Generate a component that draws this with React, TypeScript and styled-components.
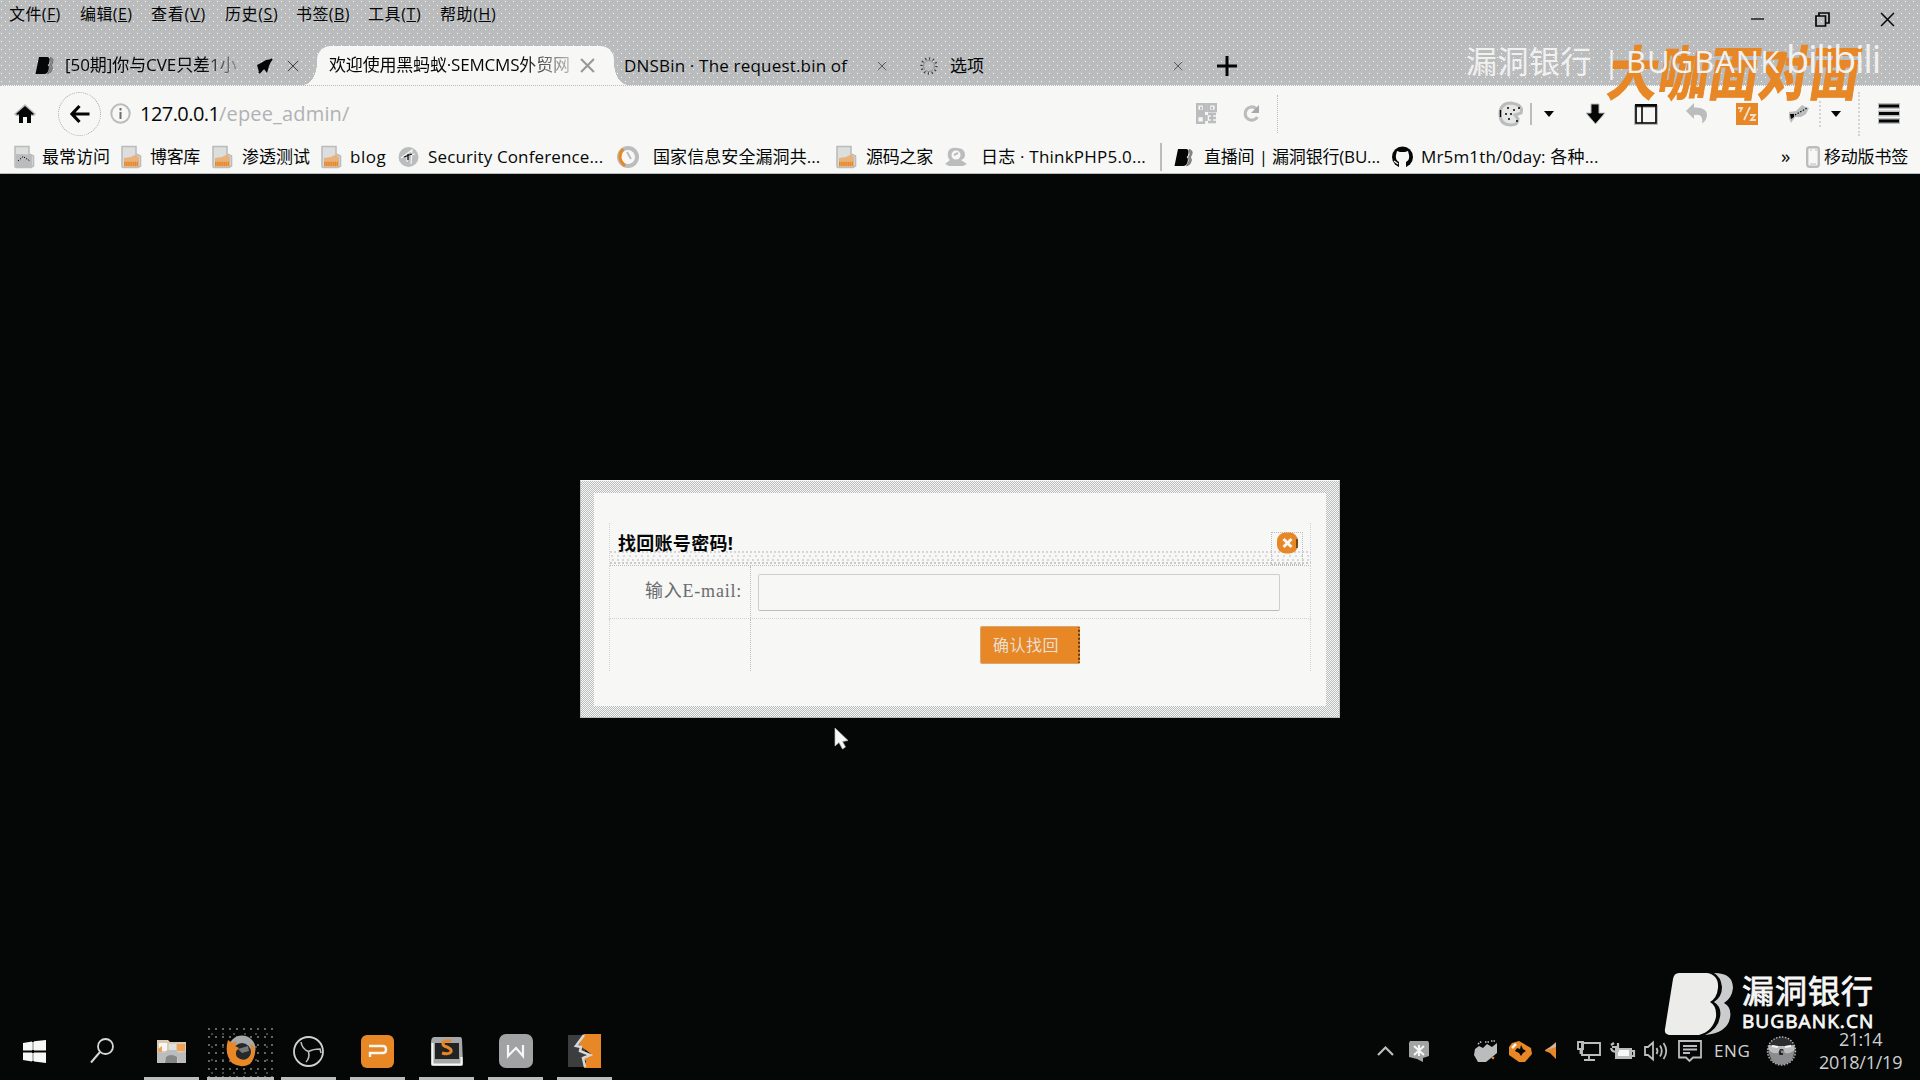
import React, { useLayoutEffect, useRef } from "react";
import styled, { createGlobalStyle, css } from "styled-components";

const INK = "#050706";
const GREY = "#bbbcbe";
const PAPER = "#f7f7f6";
const ORANGE = "#e78726";
const UI = `"Open Sans", "Noto Sans CJK SC", sans-serif`;

const Global = createGlobalStyle`
  * { box-sizing: border-box; }
  html, body { margin: 0; background: ${INK}; }
  svg { display: block; flex: none; overflow: visible; }
`;

const checker = css`
  background: conic-gradient(${GREY} 25%, ${PAPER} 0 50%, ${GREY} 0 75%, ${PAPER} 0) 0 0 / 2px 2px;
`;

const Screen = styled.div`
  position: relative;
  width: 1920px;
  height: 1080px;
  overflow: hidden;
  display: flex;
  flex-direction: column;
  background: ${INK};
  color: ${INK};
  font-family: ${UI};
`;

/* ---------- shared pieces ---------- */
const Slot = styled.div<{ $gap?: number; $top?: number }>`
  flex: none;
  display: flex;
  align-items: center;
  margin-left: ${(p) => p.$gap ?? 0}px;
  margin-top: ${(p) => p.$top ?? 0}px;
`;

const Text = styled.div<{ $gap?: number; $w: number; $size: number; $color?: string; $bold?: boolean; $top?: number; $family?: string; $fade?: boolean; $line?: number }>`
  flex: none;
  width: ${(p) => p.$w}px;
  margin-left: ${(p) => p.$gap ?? 0}px;
  margin-top: ${(p) => p.$top ?? 0}px;
  font-size: ${(p) => p.$size}px;
  font-family: ${(p) => p.$family ?? UI};
  font-weight: ${(p) => (p.$bold ? 700 : 400)};
  color: ${(p) => p.$color ?? INK};
  line-height: ${(p) => p.$line ?? 1.3};
  white-space: nowrap;
  ${(p) => p.$fade && "mask-image: linear-gradient(90deg, #000 80%, rgba(0, 0, 0, 0.25));"}
`;

type FitProps = { w: number; size?: number; gap?: number; color?: string; bold?: boolean; top?: number; family?: string; fade?: boolean; line?: number; children: React.ReactNode };

/* Single line label whose tracking is adjusted so it fills the given width. */
function Fit({ w, size = 17, gap, color, bold, top, family, fade, line, children }: FitProps) {
  const ref = useRef<HTMLSpanElement>(null);
  useLayoutEffect(() => {
    const el = ref.current;
    if (!el) return;
    el.style.letterSpacing = "0px";
    const n = (el.textContent || "").length;
    el.style.letterSpacing = `${(w - el.offsetWidth) / n}px`;
  }, [w]);
  return (
    <Text $w={w} $size={size} $gap={gap} $color={color} $bold={bold} $top={top} $family={family} $fade={fade} $line={line}>
      <span ref={ref}>{children}</span>
    </Text>
  );
}

const Rule = styled.div<{ $gap: number; $h: number; $dotted?: boolean }>`
  flex: none;
  width: 0;
  height: ${(p) => p.$h}px;
  margin-left: ${(p) => p.$gap}px;
  border-left: 2px ${(p) => (p.$dotted ? "dotted #d3d4d5" : `solid ${GREY}`)};
`;

/* ---------- top chrome ---------- */
const Chrome = styled.header`
  flex: none;
  height: 85px;
  display: flex;
  flex-direction: column;
  background-color: ${GREY};
  background-image: radial-gradient(circle at 1.5px 1.5px, ${PAPER} 0.8px, transparent 0.9px),
    radial-gradient(circle at 5.5px 5.5px, ${PAPER} 0.8px, transparent 0.9px);
  background-size: 8px 8px;
`;

const Menu = styled.nav`
  display: flex;
  padding-left: 9px;
  height: 46px;
`;
const MenuItem = styled.div<{ $w: number }>`
  flex: none;
  width: ${(p) => p.$w}px;
  padding-top: 4px;
`;
const WindowButtons = styled.div`
  margin-left: auto;
  display: flex;
  gap: 50px;
  padding: 12px 25px 0 0;
`;

const Tabs = styled.div`
  display: flex;
  align-items: center;
  height: 39px;
`;
const ActiveTab = styled.div`
  position: relative;
  flex: none;
  display: flex;
  align-items: center;
  width: 297px;
  height: 39px;
  margin-left: 18px;
  padding-left: 12px;
  background: ${PAPER};
  border-radius: 14px 14px 0 0;
  &::before,
  &::after {
    content: "";
    position: absolute;
    bottom: 0;
    width: 14px;
    height: 22px;
  }
  &::before {
    right: 100%;
    background: radial-gradient(ellipse 14px 22px at 0 0, transparent 98%, ${PAPER} 100%);
  }
  &::after {
    left: 100%;
    background: radial-gradient(ellipse 14px 22px at 100% 0, transparent 98%, ${PAPER} 100%);
  }
`;

const Toolbar = styled.div`
  flex: none;
  display: flex;
  align-items: center;
  height: 56px;
  background: ${PAPER};
  border-top: 1px dotted ${GREY};
`;
const BackButton = styled.div`
  flex: none;
  display: grid;
  place-items: center;
  width: 43px;
  height: 44px;
  margin-left: 22px;
  border: 1px dotted #a4a5a7;
  border-radius: 50%;
`;
const AddressBar = styled.div`
  flex: none;
  display: flex;
  align-items: center;
  width: 1168px;
  height: 38px;
  margin-left: 9px;
  border-right: 1px dotted ${GREY};
`;
const Bookmarks = styled.div`
  flex: none;
  display: flex;
  align-items: center;
  height: 33px;
  background: ${PAPER};
  border-bottom: 1px solid ${GREY};
`;

/* ---------- page ---------- */
const Page = styled.main`
  flex: none;
  height: 848px;
  padding: 306px 0 0 580px;
`;
const DialogFrame = styled.section`
  width: 760px;
  height: 238px;
  padding: 13px 14px 12px;
  border: 1px solid ${GREY};
  border-top-color: ${PAPER};
  ${checker}
`;
const DialogBody = styled.div`
  height: 213px;
  margin: -1px 0 0 -1px;
  width: 732px;
  padding: 30px 15px 0;
  background: ${PAPER};
`;
const DialogHead = styled.div`
  display: flex;
  justify-content: space-between;
  height: 43px;
  padding: 9px 7px 0 8px;
  border: 1px dotted #d0d1d2;
  border-top: 0;
  border-bottom-color: ${GREY};
  background: radial-gradient(circle at 1px 1px, #c6c7c8 0.7px, transparent 0.8px) 0 100% / 4px 3px repeat-x,
    radial-gradient(circle at 3px 1px, #d3d4d5 0.7px, transparent 0.8px) 0 36px / 5px 3px repeat-x,
    radial-gradient(circle at 2px 1px, #d8d9da 0.7px, transparent 0.8px) 0 32px / 6px 3px repeat-x,
    radial-gradient(circle at 1px 1px, #d3d4d5 0.7px, transparent 0.8px) 0 28px / 4px 3px repeat-x;
`;
const CloseBox = styled.div`
  display: flex;
  justify-content: center;
  width: 32px;
  height: 33px;
  border: 1px dotted ${GREY};
`;
const FormRow = styled.div<{ $h: number; $last?: boolean }>`
  display: grid;
  grid-template-columns: 141px 1fr;
  height: ${(p) => p.$h}px;
  border: 1px dotted #d0d1d2;
  border-top: 0;
  ${(p) => p.$last && "border-bottom: 0;"}
`;
const LabelCell = styled.div`
  display: flex;
  align-items: center;
  padding-left: 35px;
  border-right: 1px dotted ${GREY};
`;
const FieldCell = styled.div<{ $top: number }>`
  padding: ${(p) => p.$top}px 0 0 7px;
`;
const EmailInput = styled.input`
  display: block;
  width: 522px;
  height: 37px;
  padding: 0 8px;
  font: 16px ${UI};
  background: transparent;
  border: 1px solid #cdcecf;
  border-bottom-color: ${GREY};
  border-radius: 2px;
  outline: 0;
`;
const ConfirmButton = styled.button`
  display: flex;
  align-items: center;
  width: 100px;
  height: 38px;
  margin-left: 222px;
  padding: 0 0 0 12px;
  border: 1px solid #d8a670;
  border-right: 2px dotted #5f3a12;
  border-radius: 2px;
  background: ${ORANGE};
`;

/* ---------- taskbar ---------- */
const Taskbar = styled.footer`
  flex: none;
  display: flex;
  height: 58px;
  background: ${INK};
`;
const Task = styled.div<{ $w: number; $gap: number; $running?: boolean; $active?: boolean }>`
  flex: none;
  display: grid;
  place-items: center;
  width: ${(p) => p.$w}px;
  height: 58px;
  padding-top: 3px;
  margin-left: ${(p) => p.$gap}px;
  border-bottom: 3px solid ${(p) => (p.$running ? GREY : "transparent")};
  ${(p) =>
    p.$active &&
    `background: radial-gradient(circle at 2px 2px, #6b6c6e 0.7px, transparent 0.8px) 0 5px / 7px 8px padding-box,
      radial-gradient(circle at 5px 7px, #4b4c4e 0.7px, transparent 0.8px) 0 5px / 11px 13px padding-box;`}
`;
const Tray = styled.div`
  display: flex;
  align-items: center;
  height: 58px;
`;
const Clock = styled.div`
  flex: none;
  display: flex;
  flex-direction: column;
  width: 84px;
  margin-left: 22px;
`;

/* ---------- overlays ---------- */
const BrandTop = styled.div`
  position: absolute;
  left: 1466px;
  top: 36px;
  height: 50px;
  display: flex;
  align-items: center;
`;
const Presenter = styled.div`
  position: absolute;
  left: 1609px;
  top: 33px;
  height: 80px;
  display: flex;
  align-items: center;
  transform: skewX(-9deg) scaleY(1.17);
  -webkit-text-stroke: 1px ${ORANGE};
`;
const BrandBottom = styled.div`
  position: absolute;
  left: 1665px;
  top: 973px;
  display: flex;
`;
const BrandWords = styled.div`
  display: flex;
  flex-direction: column;
  margin: 2px 0 0 9px;
  -webkit-text-stroke: 0.8px ${PAPER};
`;
const Pointer = styled.div`
  position: absolute;
  left: 835px;
  top: 728px;
`;

/* ---------- icons ---------- */
const X = ({ s = 14, c = INK, w = 1.4 }: { s?: number; c?: string; w?: number }) => (
  <svg width={s} height={s} viewBox="0 0 14 14"><path d="M1 1L13 13M13 1L1 13" stroke={c} strokeWidth={w} fill="none" /></svg>
);
const BugIcon = ({ c = INK }: { c?: string }) => (
  <svg width="20" height="19" viewBox="0 0 20 19">
    <path d="M4 1H12Q15 1 14.5 5Q14.3 8 12.6 9Q14.5 10 13.8 13Q13 18 9 18H0.5Z" fill={c} />
    <path d="M15 1.5Q19 2 18 6L16.5 9L17.5 12Q17 17 12.5 18L15 13L14.5 9.5L16 6Z" fill="#8d8e90" stroke="#55565a" strokeWidth=".6" />
  </svg>
);
const Caret = () => <svg width="10" height="6" viewBox="0 0 10 6"><path d="M0 0H10L5 6Z" fill={INK} /></svg>;
const Folder = ({ grey = false }: { grey?: boolean }) => (
  <svg width="21" height="22" viewBox="0 0 21 22">
    <path d="M1 0.5H15V8L19.5 10V20L17 21.5H2Q1 21.5 1 20Z" fill="#dcdddd" stroke={GREY} strokeWidth="1.6" />
    {grey ? (
      <><path d="M2 8L18 8.5V21H2Z" fill={GREY} /><path d="M4 15L9 10.5L16 15" stroke={INK} strokeWidth="1" strokeDasharray="1.3 1.3" fill="none" /></>
    ) : (
      <><path d="M3 12L10 11L15 8.5L18 11V20.5H3Z" fill="#e9b27d" /><path d="M3 18H17" stroke={ORANGE} strokeWidth="4.5" strokeDasharray="1.5 .6" /></>
    )}
  </svg>
);

const bookmarks: { gap: number; icon: React.ReactNode; textGap: number; w: number; label: string }[] = [
  { gap: 14, icon: <Folder grey />, textGap: 7, w: 68, label: "最常访问" },
  { gap: 11, icon: <Folder />, textGap: 8, w: 50, label: "博客库" },
  { gap: 12, icon: <Folder />, textGap: 9, w: 68, label: "渗透测试" },
  { gap: 11, icon: <Folder />, textGap: 8, w: 36, label: "blog" },
  {
    gap: 12,
    icon: <svg width="21" height="22" viewBox="0 0 21 22"><circle cx="10.5" cy="11" r="10" fill={GREY} /><path d="M3 12L14 4L13 18M6 11L17 8M9 9V16" stroke={PAPER} strokeWidth="1.2" fill="none" /><path d="M6 11L14 8M10 8V14" stroke={INK} strokeWidth="1.2" fill="none" /></svg>,
    textGap: 9, w: 175, label: "Security Conference...",
  },
  {
    gap: 14,
    icon: <svg width="22" height="22" viewBox="0 0 22 22"><circle cx="11" cy="11" r="9" fill={PAPER} stroke={GREY} strokeWidth="4" /><path d="M6 3Q-1 12 8 20" stroke={ORANGE} strokeWidth="3" fill="none" /><path d="M10 6L14 13" stroke={GREY} strokeWidth="2" /></svg>,
    textGap: 14, w: 167, label: "国家信息安全漏洞共...",
  },
  { gap: 16, icon: <Folder />, textGap: 9, w: 67, label: "源码之家" },
  {
    gap: 12,
    icon: <svg width="22" height="20" viewBox="0 0 22 20"><path d="M3 5Q5 0 12 1Q20 1 20 8Q20 12 16 13L22 17L18 19H4L0 17L5 13Q2 11 3 5Z" fill={GREY} /><circle cx="11" cy="8" r="4.5" fill={PAPER} /><path d="M9 8L13 6" stroke={GREY} strokeWidth="2" /></svg>,
    textGap: 14, w: 165, label: "日志 · ThinkPHP5.0...",
  },
];

const tasks: { w: number; gap: number; running?: boolean; active?: boolean; icon: React.ReactNode }[] = [
  { w: 40, gap: 14, icon: <svg width="23" height="23" viewBox="0 0 23 23"><path d="M0 3L9 1.6V10.5H0ZM11 1.3L23 0V10.5H11ZM0 12.5H9V21.5L0 20ZM11 12.5H23V23L11 21.6Z" fill={PAPER} /><path d="M9 2H11V10H9ZM9 13H11V21H9Z" fill={GREY} /></svg> },
  { w: 40, gap: 28, icon: <svg width="24" height="26" viewBox="0 0 24 26"><circle cx="15.5" cy="8.5" r="7.5" stroke="#d5d6d7" strokeWidth="1.8" fill="none" /><path d="M10 14L1 24.5" stroke="#d5d6d7" strokeWidth="2" /></svg> },
  {
    w: 55, gap: 22, running: true,
    icon: <svg width="30" height="25" viewBox="0 0 30 25"><path d="M0 1H11L13 3H29V24H0Z" fill="#dcc9b1" /><path d="M2 4H10V12H2Z" fill={PAPER} /><path d="M20 5H28V12H20ZM1 10L5 7V13H1Z" fill="#eda35a" /><path d="M12 5H19V13H12Z" fill="#dfe0e0" /><path d="M0 13L8 14L10 11H19L21 14L29 13V24H22L20 18H9L7 24H0Z" fill={GREY} /><path d="M9 18Q14 14 20 18V24H8Z" fill="#858688" /></svg>,
  },
  {
    w: 67, gap: 8, running: true, active: true,
    icon: <svg width="30" height="34" viewBox="0 0 30 34"><circle cx="16" cy="15" r="13.5" fill="#a8a9ab" /><circle cx="16" cy="18" r="9" fill="#27282a" /><path d="M2 6L6 9L11 7L9 12L13 14Q8 18 11 23Q18 29 24 22Q27 18 24 10L28 12Q31 22 24 30Q15 35 6 29Q-2 20 2 6Z" fill={ORANGE} /><path d="M12 15L22 12L23 17L16 19Z" fill="#77787a" /></svg>,
  },
  { w: 55, gap: 7, running: true, icon: <svg width="31" height="31" viewBox="0 0 31 31"><circle cx="15.5" cy="15.5" r="14.5" stroke="#cfd0d1" strokeWidth="1.8" fill="none" /><path d="M15.5 15.5Q9 13 8 6M15.5 15.5Q20 13 27 13L28 17M15.5 15.5Q17 22 13 26" stroke={GREY} strokeWidth="1.6" fill="none" /></svg> },
  { w: 55, gap: 14, running: true, icon: <svg width="33" height="33" viewBox="0 0 33 33"><rect width="33" height="33" rx="6" fill={ORANGE} /><path d="M8 11H22Q25 11 25 14.5Q25 18 22 18H9V22" stroke={PAPER} strokeWidth="2.4" fill="none" /></svg> },
  {
    w: 55, gap: 14, running: true,
    icon: <svg width="32" height="29" viewBox="0 0 32 29"><path d="M3 0H29Q31 0 31 3L32 26Q32 29 29 29H3Q0 29 0 26V6Q0 0 3 0Z" fill="#a6a7a9" /><path d="M4 6H28V22H4Z" fill="#222324" /><path d="M1.5 6V27.5H30.5V20" stroke={PAPER} strokeWidth="2" fill="none" /><path d="M20 4Q12 3 12 7Q12 9 16 10Q21 12 20 15Q18 18 11 16" stroke={ORANGE} strokeWidth="3" fill="none" /></svg>,
  },
  { w: 55, gap: 14, running: true, icon: <svg width="34" height="34" viewBox="0 0 34 34"><rect width="34" height="34" rx="7" fill="#a1a2a4" /><path d="M9 11V22L17 14L24 22V11" stroke={PAPER} strokeWidth="2.2" fill="none" /></svg> },
  { w: 55, gap: 14, running: true, icon: <svg width="33" height="34" viewBox="0 0 33 34"><path d="M0 1H17V33H0Z" fill="#3c3d3f" /><path d="M16 0H33V34H16L18 27L14 24L23 20L15 14L11 11Z" fill={ORANGE} /><path d="M16 1L8 12L13 13L12 17L22 21L15 24L17 33" stroke="#d7d8d8" strokeWidth="2.5" fill="none" /></svg> },
];

const menus: [string, string, number, number][] = [
  ["文件", "F", 52, 71], ["编辑", "E", 52, 71], ["查看", "V", 55, 74], ["历史", "S", 53, 71],
  ["书签", "B", 54, 72], ["工具", "T", 53, 72], ["帮助", "H", 56, 72],
];

export default function App() {
  return (
    <Screen>
      <Global />
      <Chrome>
        <Menu>
          {menus.map(([name, key, w, step]) => (
            <MenuItem key={key} $w={step}><Fit w={w} size={16}>{name}(<u>{key}</u>)</Fit></MenuItem>
          ))}
          <WindowButtons>
            <svg width="15" height="15" viewBox="0 0 15 15"><path d="M1 7H14" stroke={INK} strokeWidth="1.3" /></svg>
            <svg width="15" height="15" viewBox="0 0 15 15"><path d="M1 4H10.5V14H1ZM4 4V1H14V11H10.5" stroke={INK} strokeWidth="1.7" fill="none" /></svg>
            <X s={15} />
          </WindowButtons>
        </Menu>
        <Tabs>
          <Slot $gap={35}><BugIcon /></Slot>
          <Fit gap={10} w={172} size={17} fade>[50期]你与CVE只差1小</Fit>
          <Slot $gap={20}>
            <svg width="16" height="16" viewBox="0 0 16 16"><path d="M0 7L4 5L9 2L15 1L12 8L10 15L7 11L2 14Z" fill={INK} /><path d="M2 15L15 1" stroke={INK} strokeWidth="2" fill="none" /></svg>
          </Slot>
          <Slot $gap={14}><X s={12} w={0.8} /></Slot>
          <ActiveTab>
            <Fit w={241} size={17} fade>欢迎使用黑蚂蚁·SEMCMS外贸网</Fit>
            <Slot $gap={10}><X s={15} c="#98999b" w={2} /></Slot>
          </ActiveTab>
          <Fit gap={10} w={223} size={17} top={1}>DNSBin · The request.bin of</Fit>
          <Slot $gap={30}><X s={10} w={0.8} /></Slot>
          <Slot $gap={33}>
            <svg width="18" height="18" viewBox="0 0 18 18"><circle cx="9" cy="9" r="7.5" stroke="#3d3e40" strokeWidth="2.4" strokeDasharray="1.2 2.7" fill="none" /><circle cx="9" cy="9" r="5.5" stroke="#77787a" strokeWidth=".7" fill="none" /></svg>
          </Slot>
          <Fit gap={12} w={34} size={17} top={1}>选项</Fit>
          <Slot $gap={189}><X s={10} w={0.8} /></Slot>
          <Slot $gap={34}><svg width="20" height="20" viewBox="0 0 20 20"><path d="M0 10H20M10 0V20" stroke={INK} strokeWidth="3" /></svg></Slot>
        </Tabs>
      </Chrome>

      <Toolbar>
        <Slot $gap={14}>
          <svg width="22" height="20" viewBox="0 0 22 20"><path d="M0 10L11 0L22 10L20 12H2Z" fill={GREY} /><path d="M2 10L11 2L20 10L18 11L17 10V19H13V13H9V19H5V10L4 11Z" fill={INK} /></svg>
        </Slot>
        <BackButton><svg width="20" height="18" viewBox="0 0 20 18"><path d="M9.5 1L2 9L9.5 17M2 9H19.5" stroke={INK} strokeWidth="3.2" fill="none" /></svg></BackButton>
        <AddressBar>
          <svg width="21" height="21" viewBox="0 0 21 21"><circle cx="10.5" cy="10.5" r="9.2" stroke={GREY} strokeWidth="2" fill="none" /><path d="M10.5 9V16M10.5 5V7.4" stroke="#6d6e70" strokeWidth="2" /></svg>
          <Fit gap={9} w={79} size={20}>127.0.0.1</Fit>
          <Fit w={131} size={20} color="#b1b2b4">/epee_admin/</Fit>
          <Slot $gap={846}>
            <svg width="21" height="21" viewBox="0 0 21 21"><path d="M1.2 1.2H8V8H1.2ZM13 1.2H19.8V8H13ZM1.2 13H8V19.8H1.2ZM10.5 0V9M0 10.5H9M12 11H20M13 15H20M12 19H20M16 10V20M10.5 12V18M4 5H6M15 5H17" stroke={GREY} strokeWidth="2.4" fill="none" /></svg>
          </Slot>
          <Slot $gap={25}>
            <svg width="18" height="18" viewBox="0 0 18 18"><path d="M14 3.5A6.6 6.6 0 1 0 15.4 12" stroke={GREY} strokeWidth="3.2" fill="none" /><path d="M17 0V8H9Z" fill="#a8a9ab" /></svg>
          </Slot>
        </AddressBar>
        <Slot $gap={221}>
          <svg width="24" height="24" viewBox="0 0 24 24"><path d="M12 1Q1 1 1 12T12 23Q19 23 19 17L16 13L22 11Q25 3 12 1Z" fill="#e6e6e5" stroke={GREY} strokeWidth="3" /><path d="M1.5 8V15M8 6H10M14 8H16M6 12H8M11 12H13M9 17H11M17 19H19M19 6H21" stroke={INK} strokeWidth="1.4" /></svg>
        </Slot>
        <Rule $gap={7} $h={22} />
        <Slot $gap={12}><Caret /></Slot>
        <Slot $gap={32}><svg width="19" height="20" viewBox="0 0 19 20"><path d="M5 0H13V9H19L9.5 20L0 9H5Z" fill={INK} stroke={GREY} strokeWidth="1" /></svg></Slot>
        <Slot $gap={29}><svg width="24" height="22" viewBox="0 0 24 22"><path d="M1.5 3.5H22.5V20.5H1.5Z" fill={PAPER} stroke={GREY} strokeWidth="3" /><path d="M2 20V3H22V20ZM1 1.8H23M8 3V20" stroke={INK} strokeWidth="1.6" fill="none" /></svg></Slot>
        <Slot $gap={28}><svg width="22" height="21" viewBox="0 0 22 21"><path d="M0 8L8 0V4.5Q21 4 21 12Q21 17 16 20.5Q18 10 8 12V16Z" fill={GREY} /></svg></Slot>
        <Slot $gap={28}><svg width="22" height="22" viewBox="0 0 22 22"><rect width="22" height="22" fill={ORANGE} /><path d="M2 5H6L4 9M14 4L8 17M14 12H19L15 17H20" stroke="#f1dfcb" strokeWidth="1.8" fill="none" /></svg></Slot>
        <Slot $gap={31}><svg width="20" height="18" viewBox="0 0 20 18"><path d="M0 7L7 6L13 0L17 2L20 3L17 9L12 12L6 12L2 18L0 13Z" fill={GREY} /><path d="M1 9H5V12L2 14Z" fill={INK} /><path d="M6 10L18 3" stroke={INK} strokeWidth="1.3" strokeDasharray="1.4 1.6" /></svg></Slot>
        <Rule $gap={10} $h={26} $dotted />
        <Slot $gap={10}><Caret /></Slot>
        <Rule $gap={17} $h={44} $dotted />
        <Slot $gap={18}><svg width="22" height="21" viewBox="0 0 22 21"><path d="M0 3H22M0 10.5H22M0 18H22" stroke={GREY} strokeWidth="6" /><path d="M1 3H21M1 10.5H21M1 18H21" stroke={INK} strokeWidth="3" /></svg></Slot>
      </Toolbar>

      <Bookmarks>
        {bookmarks.map((b) => (
          <React.Fragment key={b.label}>
            <Slot $gap={b.gap}>{b.icon}</Slot>
            <Fit gap={b.textGap} w={b.w}>{b.label}</Fit>
          </React.Fragment>
        ))}
        <Rule $gap={14} $h={28} />
        <Slot $gap={12}><BugIcon /></Slot>
        <Fit gap={10} w={176}>直播间 | 漏洞银行(BU...</Fit>
        <Slot $gap={11}>
          <svg width="23" height="22" viewBox="0 0 23 22"><circle cx="11.5" cy="11" r="10.5" fill={INK} /><path d="M8 22V16Q4 14 5 9L6 5L9 6H14L17 5L18 9Q19 14 15 16V22Z" fill={PAPER} /><path d="M3 15L7 18" stroke={PAPER} strokeWidth="1.4" /></svg>
        </Slot>
        <Fit gap={7} w={178}>Mr5m1th/0day: 各种...</Fit>
        <Fit gap={182} w={12} size={19} top={-2}>»</Fit>
        <Slot $gap={13}><svg width="14" height="22" viewBox="0 0 14 22"><rect x="1.2" y="1.2" width="11.6" height="19.6" rx="2.5" fill={PAPER} stroke={GREY} strokeWidth="2.4" /><path d="M4 4H6M9 4H11M4 18H10" stroke={GREY} strokeWidth="1" /></svg></Slot>
        <Fit gap={4} w={84}>移动版书签</Fit>
      </Bookmarks>

      <Page>
        <DialogFrame>
          <DialogBody>
            <DialogHead>
              <Fit w={115} size={18} bold>找回账号密码!</Fit>
              <CloseBox>
                <svg width="21" height="21" viewBox="0 0 21 21"><rect y="-.5" width="21" height="21" rx="8.5" fill={ORANGE} /><path d="M20 6V15" stroke={INK} strokeWidth="1" /><path d="M6.5 6L14.5 14M14.5 6L6.5 14" stroke={PAPER} strokeWidth="3" /></svg>
              </CloseBox>
            </DialogHead>
            <FormRow $h={53}>
              <LabelCell><Fit w={97} size={18} color="#6b6c6e" family={`"Liberation Serif", "Noto Sans CJK SC", serif`}>输入E-mail:</Fit></LabelCell>
              <FieldCell $top={8}><EmailInput type="text" aria-label="输入E-mail" /></FieldCell>
            </FormRow>
            <FormRow $h={52} $last>
              <LabelCell />
              <FieldCell $top={7}>
                <ConfirmButton type="button"><Fit w={66} size={16} color="#e9dfd2">确认找回</Fit></ConfirmButton>
              </FieldCell>
            </FormRow>
          </DialogBody>
        </DialogFrame>
      </Page>

      <Taskbar>
        {tasks.map((t, i) => (
          <Task key={i} $w={t.w} $gap={t.gap} $running={t.running} $active={t.active}>{t.icon}</Task>
        ))}
        <Tray>
          <Slot $gap={765}><svg width="17" height="10" viewBox="0 0 17 10"><path d="M1 9L8.5 1.5L16 9" stroke={GREY} strokeWidth="2.2" fill="none" /></svg></Slot>
          <Slot $gap={15}><svg width="20" height="21" viewBox="0 0 20 21"><path d="M1 0H19L20 2V15L14 17V21L8 18L0 16V2Z" fill="#a2a3a5" /><path d="M5 5L15 14M15 5L5 14M10 4V15" stroke={PAPER} strokeWidth="2" /></svg></Slot>
          <Slot $gap={45}><svg width="24" height="23" viewBox="0 0 24 23"><path d="M1 9L5 6L9 8L13 4L18 7L23 3V13L17 18L12 22H4L0 15Z" fill={GREY} /><path d="M4 4L8 1M11 2H15M17 1H22" stroke={GREY} strokeWidth="1.6" strokeDasharray="1.5 1" /><circle cx="19" cy="18" r="1.3" fill={ORANGE} /></svg></Slot>
          <Slot $gap={11}><svg width="23" height="21" viewBox="0 0 23 21"><path d="M3 2L10 0L22 7L23 13L16 21H10L0 14V6Z" fill={ORANGE} /><path d="M8 7L11 8L12 4L14 8L17 10L14 12L12 15L10 12L6 10Z" fill={INK} /><path d="M3 7L7 3" stroke={PAPER} strokeWidth="2.5" /></svg></Slot>
          <Slot $gap={13} $top={-2}><svg width="12" height="17" viewBox="0 0 12 17"><path d="M0 8L5 5L11 0V17L5 11L0 9Z" fill={ORANGE} /><path d="M1 8L7 4L11 1V5" fill={GREY} /></svg></Slot>
          <Slot $gap={20}><svg width="24" height="20" viewBox="0 0 24 20"><path d="M5 2H23V14H5ZM12 14V18M7 19H18M1 1H6V8H1ZM3.5 8V13" stroke={GREY} strokeWidth="1.9" fill="none" /></svg></Slot>
          <Slot $gap={9}><svg width="25" height="18" viewBox="0 0 25 18"><path d="M5 6H22V17H5Z" fill={GREY} /><path d="M8 8H19V14H8Z" fill={PAPER} /><path d="M1 3L4 1M8 1V5M1 6Q2 11 8 9V5H2M22 9H24V14H22" stroke={GREY} strokeWidth="2.2" fill="none" /></svg></Slot>
          <Slot $gap={9}><svg width="24" height="20" viewBox="0 0 24 20"><path d="M1 6H4L9 1.5V18.5L4 14H1ZM12.5 7Q14.5 10 12.5 13M16 4.5Q19.5 10 16 15.5M19.5 2Q25 10 19.5 18" stroke={GREY} strokeWidth="1.8" fill="none" /></svg></Slot>
          <Slot $gap={10}><svg width="24" height="23" viewBox="0 0 24 23"><path d="M1 1H23V17.5H15L11.5 21L8 17.5H1ZM5 6H19M5 9.5H19M5 13H12" stroke={GREY} strokeWidth="1.8" fill="none" /></svg></Slot>
          <Fit gap={12} w={37} size={17} color="#d1d2d3">ENG</Fit>
          <Slot $gap={15}><svg width="31" height="32" viewBox="0 0 31 32"><circle cx="15.5" cy="16" r="14" fill="#2c2d2f" stroke={GREY} strokeWidth="1.4" strokeDasharray="1.5 1.5" /><path d="M2 16L29 15L26 25Q16 34 6 26Z" fill="#8b8c8e" /><path d="M2 14Q5 19 12 18L14 14L17 14L19 18Q26 19 29 14L28 10L20 11H11L3 10Z" fill={GREY} /><path d="M6 11L12 12M19 12L25 11" stroke={PAPER} strokeWidth="2" /><path d="M14 16V19H17" stroke={INK} strokeWidth="1.4" fill="none" /></svg></Slot>
          <Clock>
            <Fit gap={20} w={43} size={18} color="#cecfd0">21:14</Fit>
            <Fit w={83} size={18} color="#cecfd0">2018/1/19</Fit>
          </Clock>
        </Tray>
      </Taskbar>

      <Presenter><Fit w={252} size={50} bold color={ORANGE}>大咖面对面</Fit></Presenter>
      <BrandTop>
        <Fit w={126} size={31} color="#f1f1f0">漏洞银行</Fit>
        <Fit gap={11} w={12} size={31} color="#f1f1f0">|</Fit>
        <Fit gap={11} w={154} size={31} color="#f1f1f0">BUGBANK</Fit>
        <Fit gap={6} w={94} size={38} top={-4} color="#f1f1f0">bilibili</Fit>
      </BrandTop>
      <BrandBottom>
        <svg width="68" height="63" viewBox="0 0 68 63">
          <path d="M14 0H42Q54 2 53 15Q52 25 45 29Q52 33 51 44Q48 58 34 62H4Q-1 61 0 56L8 6Q9 0 14 0Z" fill="#ececeb" />
          <path d="M49 0Q68 0 68 15Q67 25 59 30Q67 34 65 45Q62 60 40 62Q53 56 55 44Q57 34 49 29Q57 24 57 14Q56 4 49 0Z" fill="#cbcccd" />
        </svg>
        <BrandWords>
          <Fit w={132} size={32} line={1} color={PAPER}>漏洞银行</Fit>
          <Fit w={132} size={19} line={1} top={5} color={PAPER}>BUGBANK.CN</Fit>
        </BrandWords>
      </BrandBottom>
      <Pointer>
        <svg width="13" height="21" viewBox="0 0 13 21"><path d="M0 0V18L4 14.5L7.5 21L10.5 19L7.5 13.5L13 12.5Z" fill={PAPER} stroke={GREY} strokeWidth=".7" /></svg>
      </Pointer>
    </Screen>
  );
}
